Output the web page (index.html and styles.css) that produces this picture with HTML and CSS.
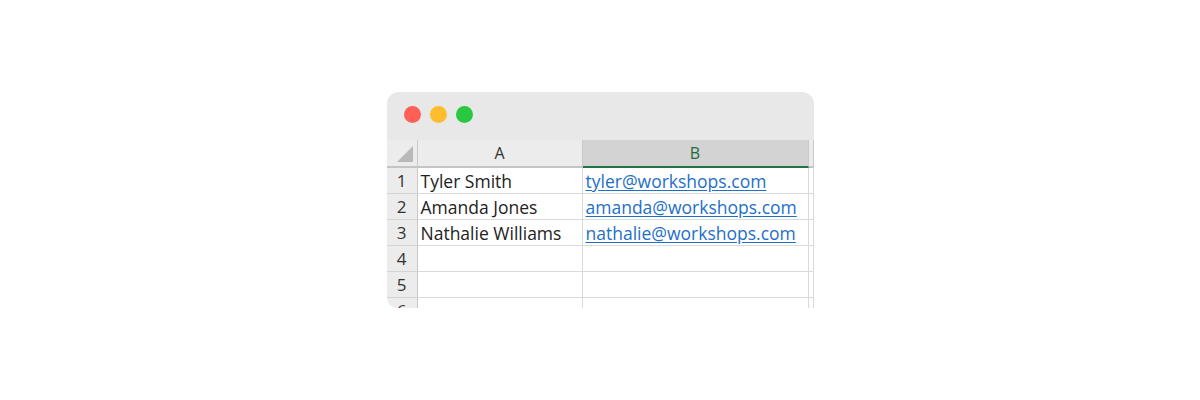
FILE: index.html
```html
<!DOCTYPE html>
<html lang="en">
<head>
  <meta charset="UTF-8">
  <meta name="viewport" content="width=device-width, initial-scale=1.0">
  <title>Contacts Sheet</title>
  <link rel="stylesheet" href="styles.css">
</head>
<body>
  <div class="window">
    <!-- Title Bar -->
    <div class="title-bar">
      <span class="light red"></span>
      <span class="light yellow"></span>
      <span class="light green"></span>
    </div>

    <!-- Sheet -->
    <div class="sheet">
      <div class="head corner"><span class="corner-mark"></span></div>
      <div class="head col">A</div>
      <div class="head col selected">B</div>
      <div class="head col"></div>

      <div class="head row">1</div>
      <div class="cell">Tyler Smith</div>
      <div class="cell"><a href="#">tyler@workshops.com</a></div>
      <div class="cell"></div>

      <div class="head row">2</div>
      <div class="cell">Amanda Jones</div>
      <div class="cell"><a href="#">amanda@workshops.com</a></div>
      <div class="cell"></div>

      <div class="head row">3</div>
      <div class="cell">Nathalie Williams</div>
      <div class="cell"><a href="#">nathalie@workshops.com</a></div>
      <div class="cell"></div>

      <div class="head row">4</div>
      <div class="cell"></div>
      <div class="cell"></div>
      <div class="cell"></div>

      <div class="head row">5</div>
      <div class="cell"></div>
      <div class="cell"></div>
      <div class="cell"></div>

      <div class="head row">6</div>
      <div class="cell"></div>
      <div class="cell"></div>
      <div class="cell"></div>
    </div>
  </div>
</body>
</html>
```

FILE: styles.css
```css
/* General Reset */
* {
  margin: 0;
  padding: 0;
  box-sizing: border-box;
}

body {
  background-color: #ffffff;
  font-family: "Open Sans", Lato, sans-serif;
  display: flex;
  justify-content: center;
  align-items: center;
  height: 400px;
  width: 100%;
  overflow: hidden;
}

/* Window */
.window {
  width: 427px;
  height: 216px;
  background-color: #ffffff;
  border-radius: 12px 12px 0 10px;
  overflow: hidden;
  display: flex;
  flex-direction: column;
}

.title-bar {
  height: 48px;
  flex-shrink: 0;
  background-color: #e8e8e8;
  display: flex;
  align-items: center;
  gap: 9px;
  padding: 0 0 4px 17px;
}

.light {
  width: 17px;
  height: 17px;
  border-radius: 50%;
}

.red { background-color: #fe5f57; }
.yellow { background-color: #febc2e; }
.green { background-color: #28c840; }

/* Sheet Grid */
.sheet {
  display: grid;
  grid-template-columns: 31px 165px 226px 1fr;
  grid-template-rows: 28px;
  grid-auto-rows: 26px;
  font-size: 17.5px;
  color: #222222;
}

.head {
  background-color: #ececec;
  color: #333333;
  display: flex;
  align-items: center;
  justify-content: center;
}

.head.col {
  border-right: 1px solid #c9c9c9;
  border-bottom: 2px solid #c4c4c4;
  font-size: 16px;
}

.head.selected {
  background-color: #d3d3d3;
  color: #1f6b3f;
  border-bottom: 2px solid #217346;
}

.head.corner {
  border-right: 1px solid #c9c9c9;
  border-bottom: 2px solid #c4c4c4;
  justify-content: flex-end;
  align-items: flex-end;
  padding: 0 4px 4px 0;
}

.corner-mark {
  width: 0;
  height: 0;
  border-left: 16px solid transparent;
  border-bottom: 16px solid #b9b9b9;
}

.head.row {
  border-right: 1px solid #c9c9c9;
  border-bottom: 1px solid #d4d4d4;
  font-size: 17px;
}

.cell {
  border-right: 1px solid #dadada;
  border-bottom: 1px solid #dadada;
  padding-left: 3px;
  display: flex;
  align-items: center;
  white-space: nowrap;
  overflow: hidden;
}

.cell a {
  color: #1e6fc8;
  text-decoration: underline;
  text-underline-offset: 2px;
}
```
